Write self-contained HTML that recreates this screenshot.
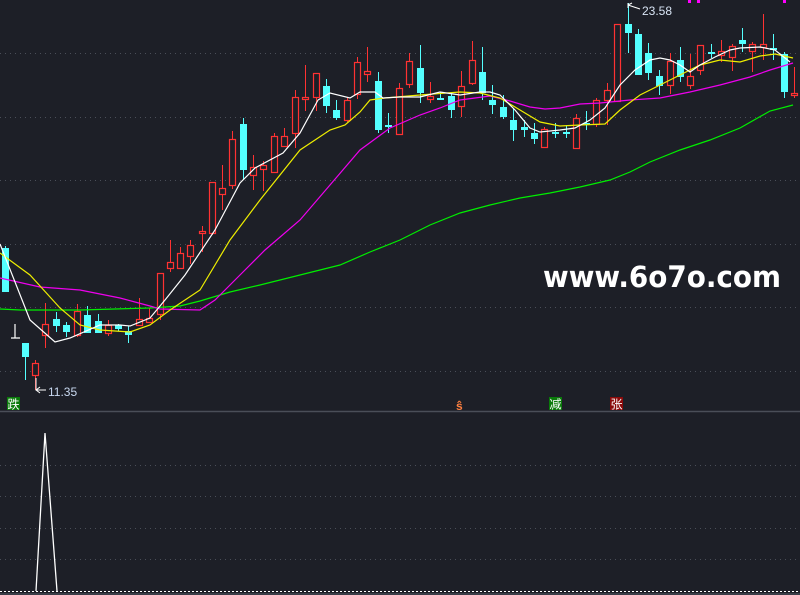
<!DOCTYPE html>
<html><head><meta charset="utf-8"><style>
html,body{margin:0;padding:0;background:#1d1f27;width:800px;height:595px;overflow:hidden}
svg{display:block}
</style></head><body>
<svg id="s" width="800" height="595" xmlns="http://www.w3.org/2000/svg" style="background:#1d1f27">
<g stroke="#4a4e58" stroke-width="1" stroke-dasharray="1,4">
<line x1="0" y1="53.5" x2="800" y2="53.5"/><line x1="0" y1="117.5" x2="800" y2="117.5"/>
<line x1="0" y1="180.5" x2="800" y2="180.5"/><line x1="0" y1="244.5" x2="800" y2="244.5"/>
<line x1="0" y1="307.5" x2="800" y2="307.5"/><line x1="0" y1="371.5" x2="800" y2="371.5"/>
<line x1="0" y1="465.5" x2="800" y2="465.5"/><line x1="0" y1="496.5" x2="800" y2="496.5"/>
<line x1="0" y1="528.5" x2="800" y2="528.5"/><line x1="0" y1="559.5" x2="800" y2="559.5"/>
</g>
<line x1="0" y1="411.5" x2="800" y2="411.5" stroke="#4a4e58" stroke-width="1.5"/>
<line x1="0" y1="591.5" x2="800" y2="591.5" stroke="#fff" stroke-width="1" stroke-dasharray="2,2"/>
<line x1="0" y1="594" x2="800" y2="594" stroke="#3a3e48" stroke-width="2"/>
<g id="c"></g>
<g fill="none" stroke-width="1.2">
<polyline stroke="#00ee00" points="0,309 20,310 80,310 150,308 180,306 200,301 230,292 260,285 300,275 340,265 370,252 400,240 430,225 460,213 490,205 520,198 550,193 580,187 610,180 630,172 650,162 680,150 710,140 740,128 770,111 793,105"/>
<polyline stroke="#ee00ee" points="0,278 40,287 80,290 120,298 150,306 160,309 200,310 215,300 240,275 265,250 300,220 330,185 360,150 390,128 420,115 440,108 460,100 490,96 510,101 530,107 545,109 560,108 580,104 600,103 630,100 660,98 690,92 720,85 750,77 770,70 793,63"/>
<polyline stroke="#eeee00" points="0,253 30,275 60,308 80,325 100,330 130,332 150,325 170,310 200,290 230,240 260,200 300,150 330,130 345,125 360,112 370,100 385,98 420,95 460,92 480,93 500,98 520,110 540,122 560,126 580,125 605,124 620,110 640,95 660,85 680,75 700,65 720,60 740,62 760,56 775,54 793,58"/>
<polyline stroke="#ffffff" points="0,244 30,320 55,342 70,338 100,325 120,325 130,326 150,318 165,300 185,275 215,230 240,183 255,168 283,153 300,133 318,100 330,93 350,98 360,92 375,92 383,98 400,97 420,97 440,92 460,95 480,92 490,92 500,95 515,110 530,128 540,132 560,130 575,128 590,120 605,108 620,85 635,70 650,60 660,58 670,60 680,65 690,72 700,65 715,57 730,50 740,48 760,47 775,50 790,62"/>
</g>
<polyline fill="none" stroke="#fff" stroke-width="1.3" points="36,591 45,433 57,591"/>
<path d="M15 324V338M11 338H20" stroke="#fff" stroke-width="1.2"/>
<path d="M36 378V390H46M36 390l4-3M36 390l4 3" stroke="#fff" fill="none" stroke-width="1"/>
<text x="48" y="396" fill="#c8d8f0" font-family="Liberation Sans,sans-serif" font-size="12">11.35</text>
<path d="M628 3V8M628 5l4-2M628 5l12 4" stroke="#fff" fill="none" stroke-width="1"/>
<text x="642" y="15" fill="#d8e4f4" font-family="Liberation Sans,sans-serif" font-size="12">23.58</text>
<rect x="688" y="0" width="3" height="3" fill="#ff00ff"/><rect x="697" y="0" width="3" height="3" fill="#ff00ff"/><rect x="783" y="0" width="3" height="3" fill="#ff00ff"/>
<text x="543" y="287" fill="#fff" font-family="DejaVu Sans,Liberation Sans,sans-serif" font-weight="bold" font-size="29" textLength="238" lengthAdjust="spacingAndGlyphs">www.6o7o.com</text>
<rect x="7" y="397" width="13" height="13" fill="#0a7a0a"/>
<text x="7.5" y="408.5" fill="#fff" font-family="Noto Sans CJK SC,sans-serif" font-size="12">跌</text>
<text x="456" y="410" fill="#ff8040" font-family="Liberation Sans,sans-serif" font-size="12" font-weight="bold">ŝ</text>
<rect x="549" y="397" width="13" height="13" fill="#0a7a0a"/>
<text x="549.5" y="408.5" fill="#fff" font-family="Noto Sans CJK SC,sans-serif" font-size="12">减</text>
<rect x="610" y="397" width="13" height="13" fill="#8a0a0a"/>
<text x="610.5" y="408.5" fill="#fff" font-family="Noto Sans CJK SC,sans-serif" font-size="12">张</text>
</svg>
<script>
var d=[
[5,248,292,246,292,0],[25,343,357,343,380,0],[35,363,375,360,390,1],[45,324,335,303,348,1],[56,319,326,312,332,0],[66,325,332,322,337,0],[77,311,335,304,337,1],[87,315,333,306,333,0],[98,321,333,314,333,0],[108,325,333,320,336,1],[118,325,329,324,331,0],[128,331,335,326,343,0],[139,319,325,298,326,1],[149,318,322,308,322,1],[160,273,314,273,320,1],[170,262,268,240,272,1],[180,253,268,247,268,1],[190,245,256,240,264,1],[202,231,233,226,252,1],[212,182,233,182,235,1],[222,188,194,165,210,1],[232,139,185,131,189,1],[243,124,170,118,180,0],[253,167,175,155,190,1],[263,165,169,161,191,1],[274,136,172,133,172,1],[284,136,146,128,147,1],[295,97,133,90,148,1],[305,97,99,65,111,1],[316,73,97,73,111,1],[326,86,106,79,113,0],[336,110,118,100,120,0],[347,100,120,97,122,1],[357,62,94,57,99,1],[367,71,74,47,82,1],[378,81,130,72,133,0],[388,125,127,113,133,0],[399,88,134,83,134,1],[409,61,84,53,88,1],[420,68,93,45,103,0],[430,96,99,82,103,1],[440,98,100,92,100,0],[451,96,110,92,118,0],[461,86,106,71,117,1],[472,60,83,41,85,1],[482,72,93,47,100,0],[492,100,105,85,114,0],[503,107,117,95,119,0],[513,120,130,108,141,0],[524,127,130,120,137,0],[534,133,139,123,144,0],[544,129,147,127,147,1],[555,132,134,123,138,0],[566,132,134,125,138,0],[576,118,148,114,148,1],[586,123,125,111,130,0],[596,100,124,98,127,1],[607,90,100,83,125,1],[617,24,101,24,101,1],[628,24,33,3,53,0],[638,34,75,29,75,0],[648,53,73,43,80,0],[659,76,86,70,95,0],[670,61,85,53,94,1],[680,60,77,47,82,0],[690,76,85,54,89,1],[700,45,70,45,75,1],[711,52,54,44,58,0],[721,51,55,40,62,1],[732,46,57,44,71,1],[742,40,44,28,52,0],[752,44,51,42,72,1],[763,44,47,14,60,1],[773,48,50,34,60,0],[784,54,92,52,98,0],[794,93,95,67,98,1]];
var g=document.getElementById('c'),h='';
d.forEach(function(c){var x=c[0],col=c[5]?'#ff3232':'#54ffff';
h+='<line x1="'+(x+.5)+'" y1="'+c[3]+'" x2="'+(x+.5)+'" y2="'+c[4]+'" stroke="'+col+'" stroke-width="1"/>';
var hh=Math.max(c[2]-c[1],1.5);
if(c[5])h+='<rect x="'+(x-2.5)+'" y="'+(c[1]+.5)+'" width="6" height="'+Math.max(hh,2)+'" fill="#1d1f27" stroke="'+col+'" stroke-width="1.2"/>';
else h+='<rect x="'+(x-3)+'" y="'+c[1]+'" width="7" height="'+hh+'" fill="'+col+'"/>';});
g.innerHTML=h;
</script>
</body></html>
